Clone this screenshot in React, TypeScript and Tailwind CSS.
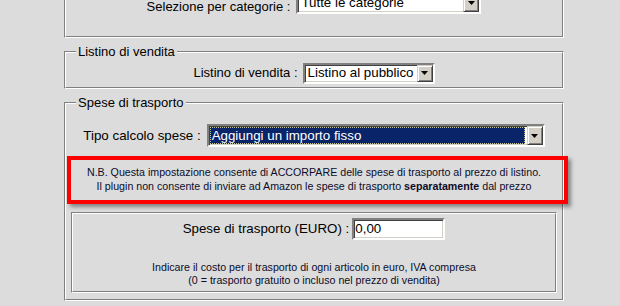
import React from 'react';

// Classic Windows-style groove frame (fieldset look)
const Groove = ({ className = '', innerClassName = '', legend, children }: { className?: string; innerClassName?: string; legend?: string; children?: React.ReactNode }) => (
  <div className={`relative border border-t-[#808080] border-l-[#808080] border-b-white border-r-white ${className}`}>
    <div className={`h-full border border-t-white border-l-white border-b-[#808080] border-r-[#808080] ${innerClassName}`}>
      {children}
    </div>
    {legend && (
      <span className="absolute left-[11px] -top-[8px] bg-[#dcdcdc] px-[2px] text-[13px] leading-[15px]">{legend}</span>
    )}
  </div>
);

const ArrowButton = () => (
  <div className="flex w-[16px] shrink-0 items-center justify-center border border-t-[#d4d0c8] border-l-[#d4d0c8] border-b-[#404040] border-r-[#404040] bg-[#d4d0c8] shadow-[inset_1px_1px_0_#fff,inset_-1px_-1px_0_#808080]">
    <svg width="7" height="4" viewBox="0 0 7 4">
      <polygon points="0,0 7,0 3.5,4" fill="#000" />
    </svg>
  </div>
);

const Sunken = ({ className = '', children }: { className?: string; children?: React.ReactNode }) => (
  <div className={`flex border-2 border-t-[#808080] border-l-[#808080] border-b-white border-r-white bg-white shadow-[inset_1px_1px_0_#404040,inset_-1px_-1px_0_#d4d0c8] ${className}`}>
    {children}
  </div>
);

const Select = ({ value, className, selected = false }: { value: string; className: string; selected?: boolean }) => (
  <Sunken className={className}>
    {selected ? (
      <div className="flex flex-1 p-[1px] pr-[2px]">
        <div className="flex flex-1 items-center border border-dotted border-[#c8c8a0] bg-[#0a246a] pl-[1px] text-[13.33px] leading-none text-white">
          {value}
        </div>
      </div>
    ) : (
      <div className="flex flex-1 items-center pl-[3px] text-[13.33px] leading-none">{value}</div>
    )}
    <ArrowButton />
  </Sunken>
);

export default function App() {
  return (
    <div className="h-[306px] w-[620px] overflow-hidden bg-[#dcdcdc] font-['Liberation_Sans',Arial,sans-serif] text-black">
      <div className="ml-[64px] w-[500px]">
        <Groove className="-mt-[40px] h-[78px]" innerClassName="flex items-end justify-center pb-[22px]">
          <div className="flex items-end gap-[6px]">
            <span className="text-[13px] leading-[15px]">Selezione per categorie :</span>
            <Select value="Tutte le categorie" className="h-[23px] w-[185px]" />
          </div>
        </Groove>

        <Groove className="mt-[13px] h-[38px]" innerClassName="flex justify-center pt-[6px]" legend="Listino di vendita">
          <div className="flex items-center gap-[5px]">
            <span className="text-[13px]">Listino di vendita :</span>
            <Select value="Listino al pubblico" className="h-[21px] w-[132px]" />
          </div>
        </Groove>

        <Groove className="mt-[13px] h-[199px]" innerClassName="px-[5px] pt-[20px]" legend="Spese di trasporto">
          <div className="flex items-center justify-center gap-[6px]">
            <span className="text-[13.33px]">Tipo calcolo spese :</span>
            <Select value="Aggiungi un importo fisso" className="h-[23px] w-[338px]" selected />
          </div>

          <div className="relative mt-[18px] text-center text-[10.67px] leading-[14px] text-[#0c0c2a]">
            <p>N.B. Questa impostazione consente di ACCORPARE delle spese di trasporto al prezzo di listino.</p>
            <p>
              Il plugin non consente di inviare ad Amazon le spese di trasporto <b>separatamente</b> dal prezzo
            </p>
            <div className="pointer-events-none absolute -bottom-[11px] left-[-4px] -right-[11px] -top-[9px] border-4 border-[#ff0000] shadow-[3px_3px_4px_rgba(0,0,0,0.4)]" />
          </div>

          <Groove className="mt-[19px] h-[81px]" innerClassName="pt-[4px]">
            <div className="flex items-center justify-center gap-[3px]">
              <span className="text-[13.33px]">Spese di trasporto (EURO) :</span>
              <Sunken className="h-[22px] w-[93px] items-center pl-[1px] text-[13.33px]">0,00</Sunken>
            </div>
            <div className="mt-[21px] text-center text-[10.67px] leading-[13px] text-[#0c0c2a]">
              <p>Indicare il costo per il trasporto di ogni articolo in euro, IVA compresa</p>
              <p>(0 = trasporto gratuito o incluso nel prezzo di vendita)</p>
            </div>
          </Groove>
        </Groove>
      </div>
    </div>
  );
}
